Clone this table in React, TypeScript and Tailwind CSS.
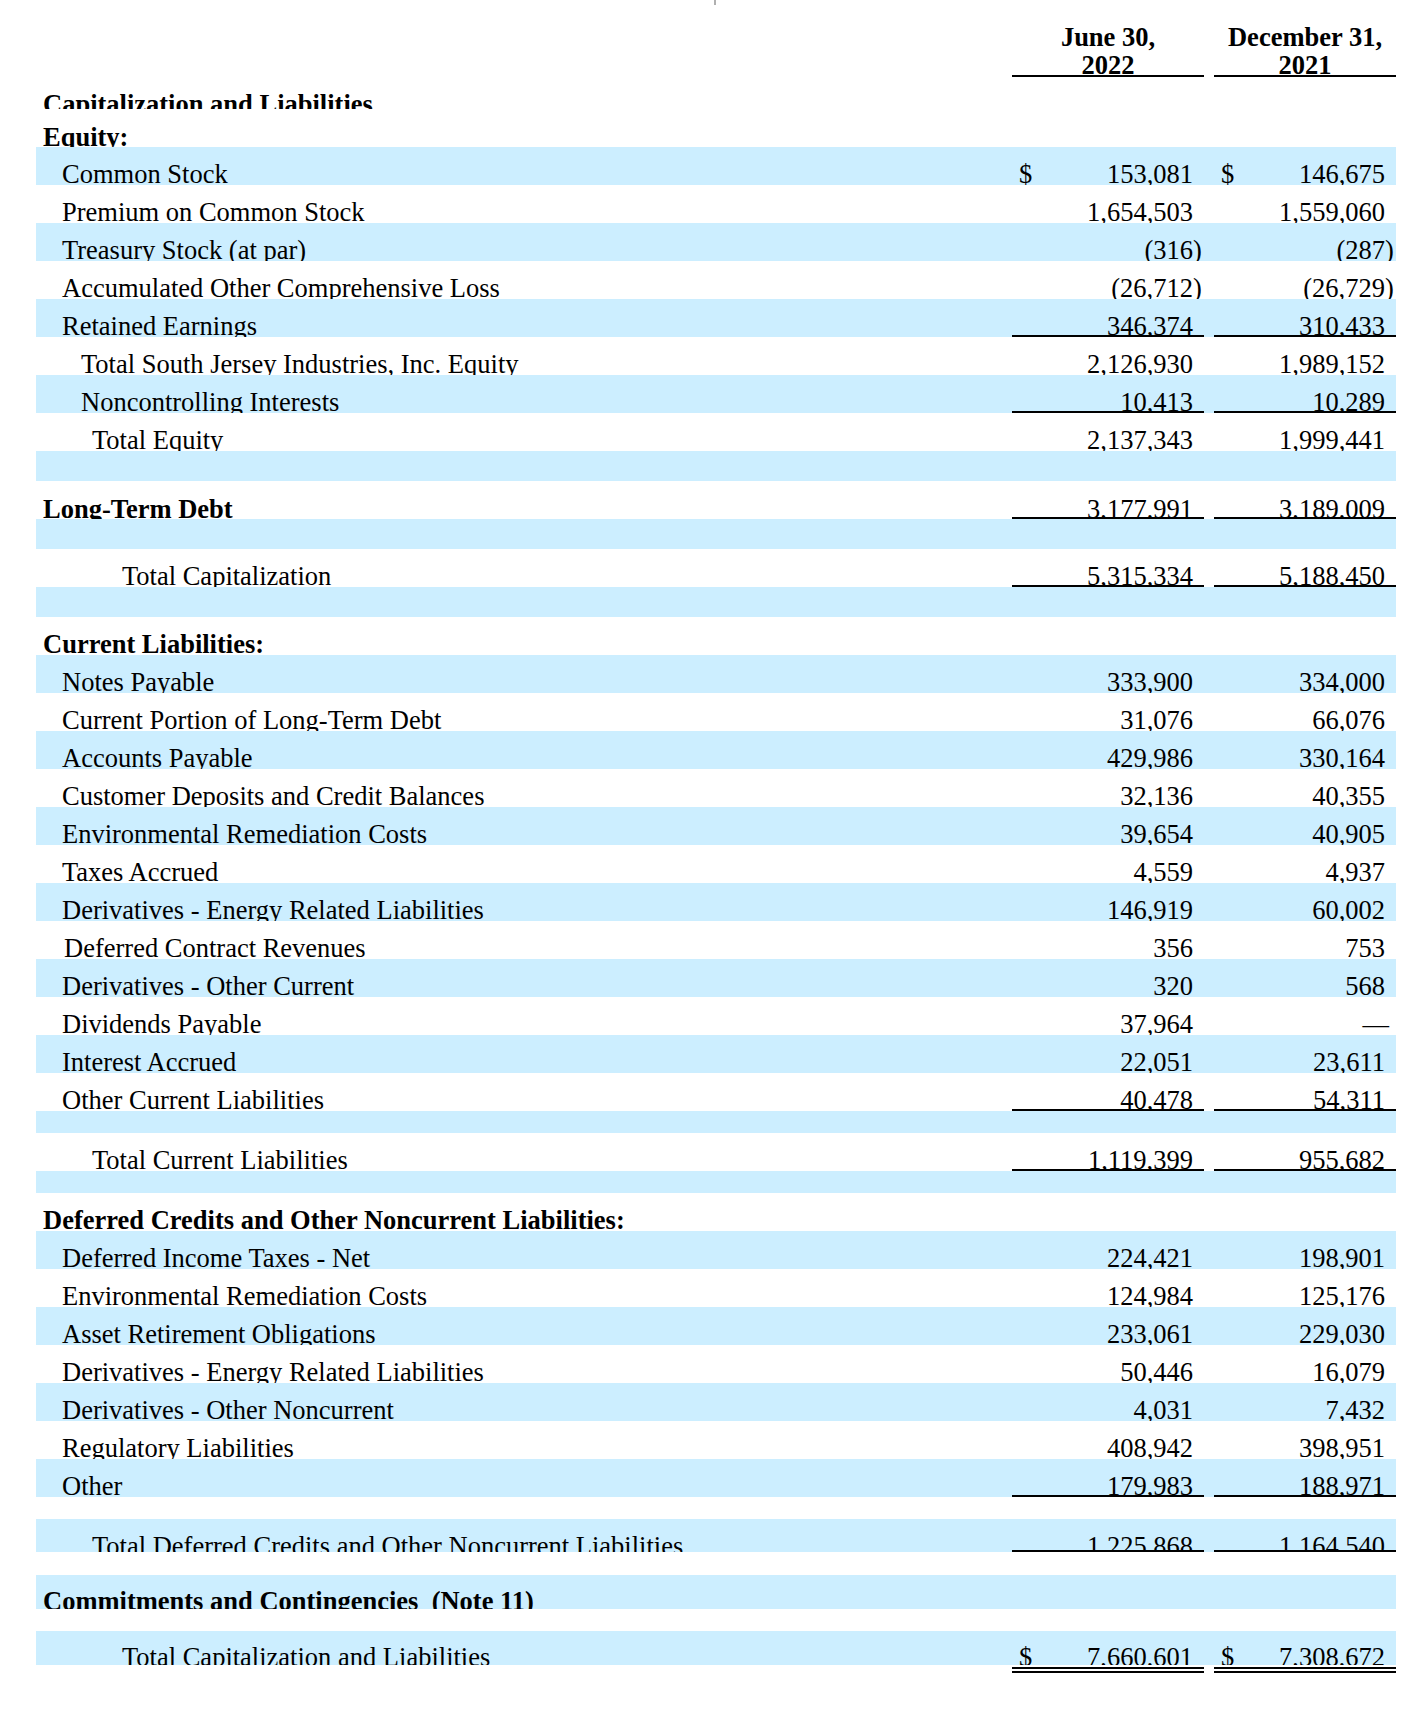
import React from 'react';

type Row = {
  label?: string;
  indent?: number;
  bold?: boolean;
  blue?: boolean;
  a?: string;
  b?: string;
  dollar?: boolean;
  line?: boolean;
  h?: number;
  drop?: number;
};

const rows: Row[] = [
  { label: 'Capitalization and Liabilities', bold: true, indent: 7, h: 32, drop: 10 },
  { label: 'Equity:', bold: true, indent: 7, drop: 5 },
  { label: 'Common Stock', blue: true, a: '153,081', b: '146,675', dollar: true },
  { label: 'Premium on Common Stock', a: '1,654,503', b: '1,559,060' },
  { label: 'Treasury Stock (at par)', blue: true, a: '(316)', b: '(287)' },
  { label: 'Accumulated Other Comprehensive Loss', a: '(26,712)', b: '(26,729)' },
  { label: 'Retained Earnings', blue: true, a: '346,374', b: '310,433', line: true },
  { label: 'Total South Jersey Industries, Inc. Equity', indent: 45, a: '2,126,930', b: '1,989,152' },
  { label: 'Noncontrolling Interests', indent: 45, blue: true, a: '10,413', b: '10,289', line: true },
  { label: 'Total Equity', indent: 56, a: '2,137,343', b: '1,999,441' },
  { blue: true, h: 30 },
  { label: 'Long-Term Debt', bold: true, indent: 7, a: '3,177,991', b: '3,189,009', line: true, drop: 5 },
  { blue: true, h: 30 },
  { label: 'Total Capitalization', indent: 86, a: '5,315,334', b: '5,188,450', line: true },
  { blue: true, h: 30 },
  { label: 'Current Liabilities:', bold: true, indent: 7 },
  { label: 'Notes Payable', blue: true, a: '333,900', b: '334,000' },
  { label: 'Current Portion of Long-Term Debt', a: '31,076', b: '66,076' },
  { label: 'Accounts Payable', blue: true, a: '429,986', b: '330,164' },
  { label: 'Customer Deposits and Credit Balances', a: '32,136', b: '40,355' },
  { label: 'Environmental Remediation Costs', blue: true, a: '39,654', b: '40,905' },
  { label: 'Taxes Accrued', a: '4,559', b: '4,937' },
  { label: 'Derivatives - Energy Related Liabilities', blue: true, a: '146,919', b: '60,002' },
  { label: 'Deferred Contract Revenues', indent: 28, a: '356', b: '753' },
  { label: 'Derivatives - Other Current', blue: true, a: '320', b: '568' },
  { label: 'Dividends Payable', a: '37,964', b: '—' },
  { label: 'Interest Accrued', blue: true, a: '22,051', b: '23,611' },
  { label: 'Other Current Liabilities', a: '40,478', b: '54,311', line: true },
  { blue: true, h: 22 },
  { label: 'Total Current Liabilities', indent: 56, a: '1,119,399', b: '955,682', line: true },
  { blue: true, h: 22 },
  { label: 'Deferred Credits and Other Noncurrent Liabilities:', bold: true, indent: 7 },
  { label: 'Deferred Income Taxes - Net', blue: true, a: '224,421', b: '198,901' },
  { label: 'Environmental Remediation Costs', a: '124,984', b: '125,176' },
  { label: 'Asset Retirement Obligations', blue: true, a: '233,061', b: '229,030' },
  { label: 'Derivatives - Energy Related Liabilities', a: '50,446', b: '16,079' },
  { label: 'Derivatives - Other Noncurrent', blue: true, a: '4,031', b: '7,432' },
  { label: 'Regulatory Liabilities', a: '408,942', b: '398,951' },
  { label: 'Other', blue: true, a: '179,983', b: '188,971', line: true },
  { h: 22 },
  { label: 'Total Deferred Credits and Other Noncurrent Liabilities', indent: 56, blue: true, a: '1,225,868', b: '1,164,540', line: true, h: 33, drop: 9 },
  { h: 23 },
  { label: 'Commitments and Contingencies  (Note 11)', bold: true, indent: 7, blue: true, h: 34, drop: 7 },
  { h: 22 },
  { label: 'Total Capitalization and Liabilities', indent: 86, blue: true, a: '7,660,601', b: '7,308,672', dollar: true, h: 34, drop: 7 },
];

function Value({ v, dollar, line, parenW, drop, w }: { v?: string; dollar?: boolean; line?: boolean; parenW: number; drop: number; w: string }) {
  let num = v ?? '';
  let paren = '';
  if (num.endsWith(')')) {
    num = num.slice(0, -1);
    paren = ')';
  }
  return (
    <div className={`${w} h-full flex items-end overflow-hidden ${line ? 'shadow-[inset_0_-2px_0_#000]' : ''}`}>
      <div className="flex w-full leading-[30px]" style={{ marginBottom: -drop }}>
        <span className="pl-[7px] w-[30px]">{dollar ? '$' : ''}</span>
        <span className={`flex-1 text-right ${num === '—' ? 'mr-[-4px]' : ''}`}>{num}</span>
        <span className="whitespace-nowrap" style={{ width: parenW }}>{paren}</span>
      </div>
    </div>
  );
}

export default function App() {
  return (
    <div className="bg-white text-black font-['Liberation_Serif','Times_New_Roman',serif] text-[26.5px] pb-[40px]">
      <div className="h-[5px] w-[2px] ml-[714px] bg-[#b0b0b0]" />
      <div className="flex ml-[36px] w-[1360px] h-[72px] items-end font-bold">
        <div className="flex-1" />
        <div className="w-[192px] h-[54px] overflow-hidden border-b-2 border-black text-center leading-[28px]">
          <div>June 30,</div>
          <div>2022</div>
        </div>
        <div className="w-[10px]" />
        <div className="w-[182px] h-[54px] overflow-hidden border-b-2 border-black text-center leading-[28px]">
          <div>December 31,</div>
          <div>2021</div>
        </div>
      </div>

      {rows.map((r, i) => {
        const drop = r.drop ?? 4;
        return (
          <div
            key={i}
            className={`flex ml-[36px] w-[1360px] ${r.blue ? 'bg-[#cceeff]' : ''}`}
            style={{ height: r.h ?? 38 }}
          >
            <div className="flex-1 h-full flex items-end overflow-hidden">
              {r.label && (
                <span
                  className={`whitespace-pre leading-[30px] ${r.bold ? 'font-bold' : ''}`}
                  style={{ paddingLeft: r.indent ?? 26, marginBottom: -drop }}
                >
                  {r.label}
                </span>
              )}
            </div>
            {r.a !== undefined || r.b !== undefined ? (
              <>
                <Value v={r.a} dollar={r.dollar} line={r.line} parenW={11} drop={drop} w="w-[192px]" />
                <div className="w-[10px]" />
                <Value v={r.b} dollar={r.dollar} line={r.line} parenW={11} drop={drop} w="w-[182px]" />
              </>
            ) : (
              <div className="w-[384px]" />
            )}
          </div>
        );
      })}

      <div className="flex ml-[36px] w-[1360px] h-[8px]">
        <div className="flex-1" />
        <div className="w-[192px] mt-[2px] h-[6px] border-y-2 border-black" />
        <div className="w-[10px]" />
        <div className="w-[182px] mt-[2px] h-[6px] border-y-2 border-black" />
      </div>
    </div>
  );
}
